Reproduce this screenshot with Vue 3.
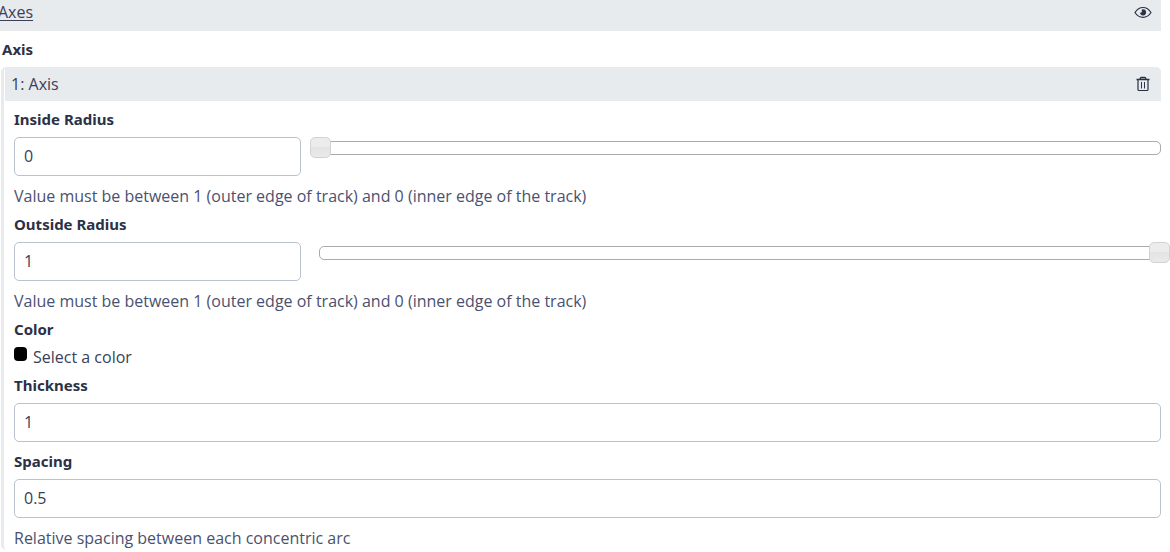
<script setup>
import { ref } from 'vue'

const inside = ref(0)
const outside = ref(1)
const thickness = ref('1')
const spacing = ref('0.5')
const radiusHelp = 'Value must be between 1 (outer edge of track) and 0 (inner edge of the track)'
</script>

<template>
  <main class="editor">
    <header class="section-bar">
      <a href="#axes" class="section-link">Axes</a>
      <button type="button" class="icon-button" aria-label="Toggle visibility">
        <svg width="18" height="14" viewBox="0 0 18 14" aria-hidden="true">
          <path d="M1 7.500C3 4.300 5.800 2.500 9 2.500s6 1.800 8 5c-2 3.200-4.800 4.800-8 4.800S3 10.700 1 7.500Z" fill="none" stroke="currentColor" stroke-width="1.200" />
          <path d="M9 4.200a3.100 3.100 0 1 1-3.100 3.400c.6.3 2 .1 2-1.100 0-.9-.2-1.100-.4-1.500.4-.5.8-.8 1.500-.8Z" fill="currentColor" />
        </svg>
      </button>
    </header>

    <h2 class="group-title">Axis</h2>

    <section id="axes" class="panel">
      <header class="panel-bar">
        <span>1: Axis</span>
        <button type="button" class="icon-button" aria-label="Delete axis">
          <svg width="18" height="18" viewBox="0 0 18 18" aria-hidden="true">
            <g fill="none" stroke="currentColor">
              <path d="M2.500 4.500h13M6.200 4.200V3.500Q6.200 2.500 7.300 2.500h3.400q1.100 0 1.100 1v.7" stroke-width="1.300" />
              <path d="M4 4.500v10.100q0 .9.900.9h8.200q.9 0 .9-.9V4.500" stroke-width="1.200" />
              <path d="M7.500 7v6.500M10.500 7v6.500" />
            </g>
          </svg>
        </button>
      </header>

      <div class="fields">
        <div class="field">
          <label class="label" for="inside">Inside Radius</label>
          <div class="range-row">
            <input id="inside" v-model="inside" class="text-input" type="text" />
            <div class="track">
              <input v-model="inside" class="slider" type="range" min="0" max="1" step="0.01" aria-label="Inside radius slider" />
            </div>
          </div>
          <p class="help">{{ radiusHelp }}</p>
        </div>

        <div class="field">
          <label class="label" for="outside">Outside Radius</label>
          <div class="range-row">
            <input id="outside" v-model="outside" class="text-input" type="text" />
            <div class="track">
              <input v-model="outside" class="slider" type="range" min="0" max="1" step="0.01" aria-label="Outside radius slider" />
            </div>
          </div>
          <p class="help">{{ radiusHelp }}</p>
        </div>

        <div class="field">
          <span id="color-label" class="label">Color</span>
          <button type="button" class="color-button" aria-describedby="color-label">
            <span class="swatch"></span>Select a color
          </button>
        </div>

        <div class="field plain">
          <label class="label" for="thickness">Thickness</label>
          <input id="thickness" v-model="thickness" class="text-input" type="text" />
        </div>

        <div class="field">
          <label class="label" for="spacing">Spacing</label>
          <input id="spacing" v-model="spacing" class="text-input" type="text" />
          <p class="help">Relative spacing between each concentric arc</p>
        </div>
      </div>
    </section>
  </main>
</template>

<style>
body {
  background: #fff;
  overflow: hidden;
}
</style>

<style scoped>
.editor,
.editor * {
  box-sizing: border-box;
}

.editor {
  padding-right: 9px;
  font: 16px/24px "Open Sans", "Noto Sans", sans-serif;
  color: #3b4058;
}

.section-bar,
.panel-bar {
  display: flex;
  align-items: center;
  justify-content: space-between;
  background: #e7ebee;
}

.section-bar {
  padding: 0 9px 7px 0;
}

.section-link {
  margin-left: -2px;
  color: inherit;
  text-underline-offset: 2px;
}

.icon-button {
  display: flex;
  padding: 0;
  border: 0;
  background: none;
  color: #2c3145;
}

.group-title {
  margin: 6px 2px;
  font: 700 15px/24px "Noto Sans", sans-serif;
  color: #2c3145;
}

.panel {
  margin-left: 1px;
  padding-left: 1px;
  border-left: 3px solid #e7ebee;
  border-radius: 5px;
}

.panel-bar {
  padding: 5px 9px 5px 6px;
  border-top-right-radius: 5px;
}

.fields {
  display: flex;
  flex-direction: column;
  gap: 4px;
  padding: 6px 0 0 9px;
}

.plain {
  margin-bottom: 3px;
}

.label {
  display: block;
  margin-bottom: 6px;
  font: 700 15px/24px "Noto Sans", sans-serif;
  color: #2c3145;
}

.text-input {
  display: block;
  width: 100%;
  height: 39px;
  padding: 0 9px 2px;
  border: 1px solid #b9c2cf;
  border-radius: 5px;
  background: #fff;
  font: inherit;
  color: inherit;
}

.range-row {
  display: grid;
  grid-template-columns: 25% 1fr;
  column-gap: 18px;
}

.track {
  height: 14px;
  margin-top: 4px;
  border: 1px solid #aaa;
  border-radius: 5px;
}

.slider {
  display: block;
  width: calc(100% + 20px);
  height: 21px;
  margin: -5px -10px;
  appearance: none;
  background: none;
}

.slider::-webkit-slider-thumb {
  appearance: none;
  width: 21px;
  height: 21px;
  border: 1px solid #d2d2d2;
  border-radius: 5px;
  background: linear-gradient(#ececec 50%, #e4e4e4 50%, #e9e9e9);
}

.help {
  margin: 8px 0 0;
  color: #4a5170;
}

.color-button {
  display: flex;
  align-items: flex-start;
  gap: 6px;
  padding: 0;
  border: 0;
  background: none;
  font: inherit;
  line-height: 20px;
  height: 22px;
  color: inherit;
}

.swatch {
  width: 13px;
  height: 14px;
  border-radius: 4px;
  background: #000;
}
</style>
